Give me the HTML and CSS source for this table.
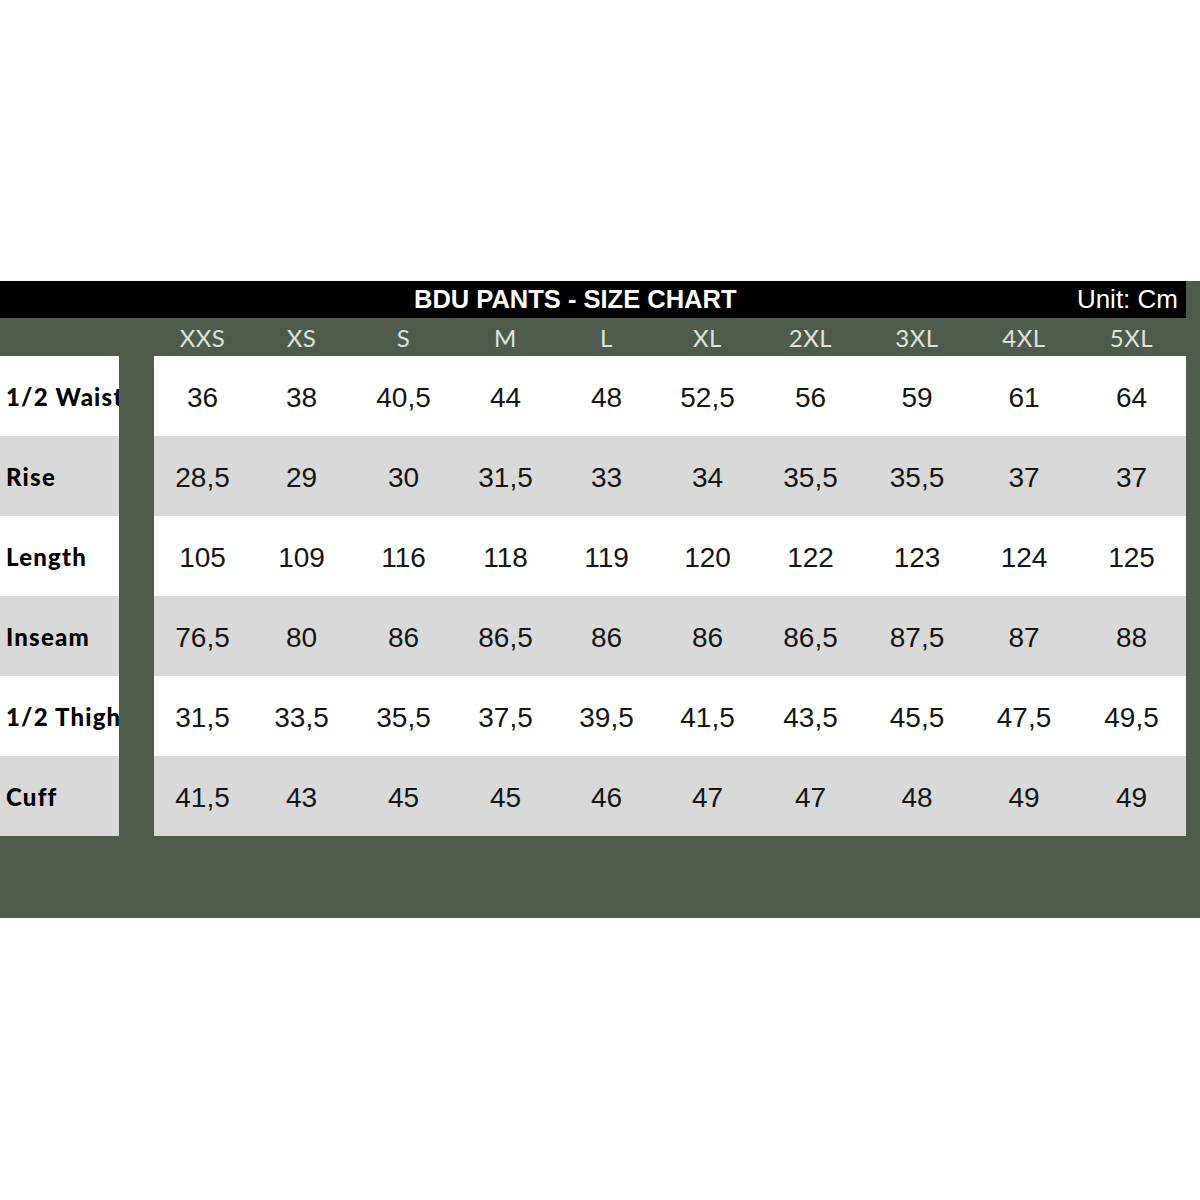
FILE: index.html
```html
<!DOCTYPE html>
<html>
<head>
<meta charset="utf-8">
<link rel="stylesheet" href="styles.css">
</head>
<body>
<div class="chart">
  <div class="titlebar">
    <span class="title">BDU PANTS - SIZE CHART</span>
    <span class="unit">Unit: Cm</span>
  </div>
  <div class="row head">
    <div class="label"></div>
    <div class="cells">
      <div>XXS</div><div>XS</div><div>S</div><div>M</div><div>L</div><div>XL</div><div>2XL</div><div>3XL</div><div>4XL</div><div>5XL</div>
    </div>
  </div>
  <div class="row white">
    <div class="label">1/2 Waist</div>
    <div class="cells">
      <div>36</div><div>38</div><div>40,5</div><div>44</div><div>48</div><div>52,5</div><div>56</div><div>59</div><div>61</div><div>64</div>
    </div>
  </div>
  <div class="row grey">
    <div class="label">Rise</div>
    <div class="cells">
      <div>28,5</div><div>29</div><div>30</div><div>31,5</div><div>33</div><div>34</div><div>35,5</div><div>35,5</div><div>37</div><div>37</div>
    </div>
  </div>
  <div class="row white">
    <div class="label">Length</div>
    <div class="cells">
      <div>105</div><div>109</div><div>116</div><div>118</div><div>119</div><div>120</div><div>122</div><div>123</div><div>124</div><div>125</div>
    </div>
  </div>
  <div class="row grey">
    <div class="label">Inseam</div>
    <div class="cells">
      <div>76,5</div><div>80</div><div>86</div><div>86,5</div><div>86</div><div>86</div><div>86,5</div><div>87,5</div><div>87</div><div>88</div>
    </div>
  </div>
  <div class="row white">
    <div class="label">1/2 Thigh</div>
    <div class="cells">
      <div>31,5</div><div>33,5</div><div>35,5</div><div>37,5</div><div>39,5</div><div>41,5</div><div>43,5</div><div>45,5</div><div>47,5</div><div>49,5</div>
    </div>
  </div>
  <div class="row grey">
    <div class="label">Cuff</div>
    <div class="cells">
      <div>41,5</div><div>43</div><div>45</div><div>45</div><div>46</div><div>47</div><div>47</div><div>48</div><div>49</div><div>49</div>
    </div>
  </div>
</div>
</body>
</html>
```

FILE: styles.css
```css
html, body {
  margin: 0;
  padding: 0;
  background: #ffffff;
}

.chart {
  margin-top: 281px;
  width: 1200px;
  background: #505a4c;
  padding-bottom: 82px;
}

.titlebar {
  width: 1186px;
  height: 37px;
  background: #000000;
  display: flex;
  align-items: center;
  color: #ffffff;
  font-family: "Liberation Sans", Arial, sans-serif;
  box-sizing: border-box;
  padding-left: 414px;
  padding-right: 8px;
}

.title {
  font-weight: bold;
  font-size: 25.5px;
}

.unit {
  margin-left: auto;
  font-size: 26px;
}

.row {
  display: flex;
  height: 80px;
}

.row.head {
  height: 38px;
}

.label {
  width: 119px;
  box-sizing: border-box;
  padding-left: 6px;
  display: flex;
  align-items: center;
  font-family: Lato, "Open Sans", sans-serif;
  font-weight: 900;
  font-size: 24px;
  letter-spacing: 1.2px;
  color: #000000;
  white-space: nowrap;
  overflow: hidden;
}

.cells {
  margin-left: 35px;
  width: 1032px;
  display: grid;
  grid-template-columns: 97px 101px 103px 101px 101px 101px 105px 108px 106px 109px;
}

.cells > div {
  display: flex;
  align-items: center;
  justify-content: center;
  padding-top: 4px;
  font-family: "Liberation Sans", Arial, sans-serif;
  font-size: 28px;
  color: #151515;
}

.head .cells > div {
  padding-top: 0;
  font-family: Lato, "Open Sans", sans-serif;
  font-size: 24px;
  letter-spacing: 0.5px;
  color: #dde3dc;
}

.white .label,
.white .cells {
  background: #ffffff;
}

.grey .label,
.grey .cells {
  background: #d9d9d9;
}
```
